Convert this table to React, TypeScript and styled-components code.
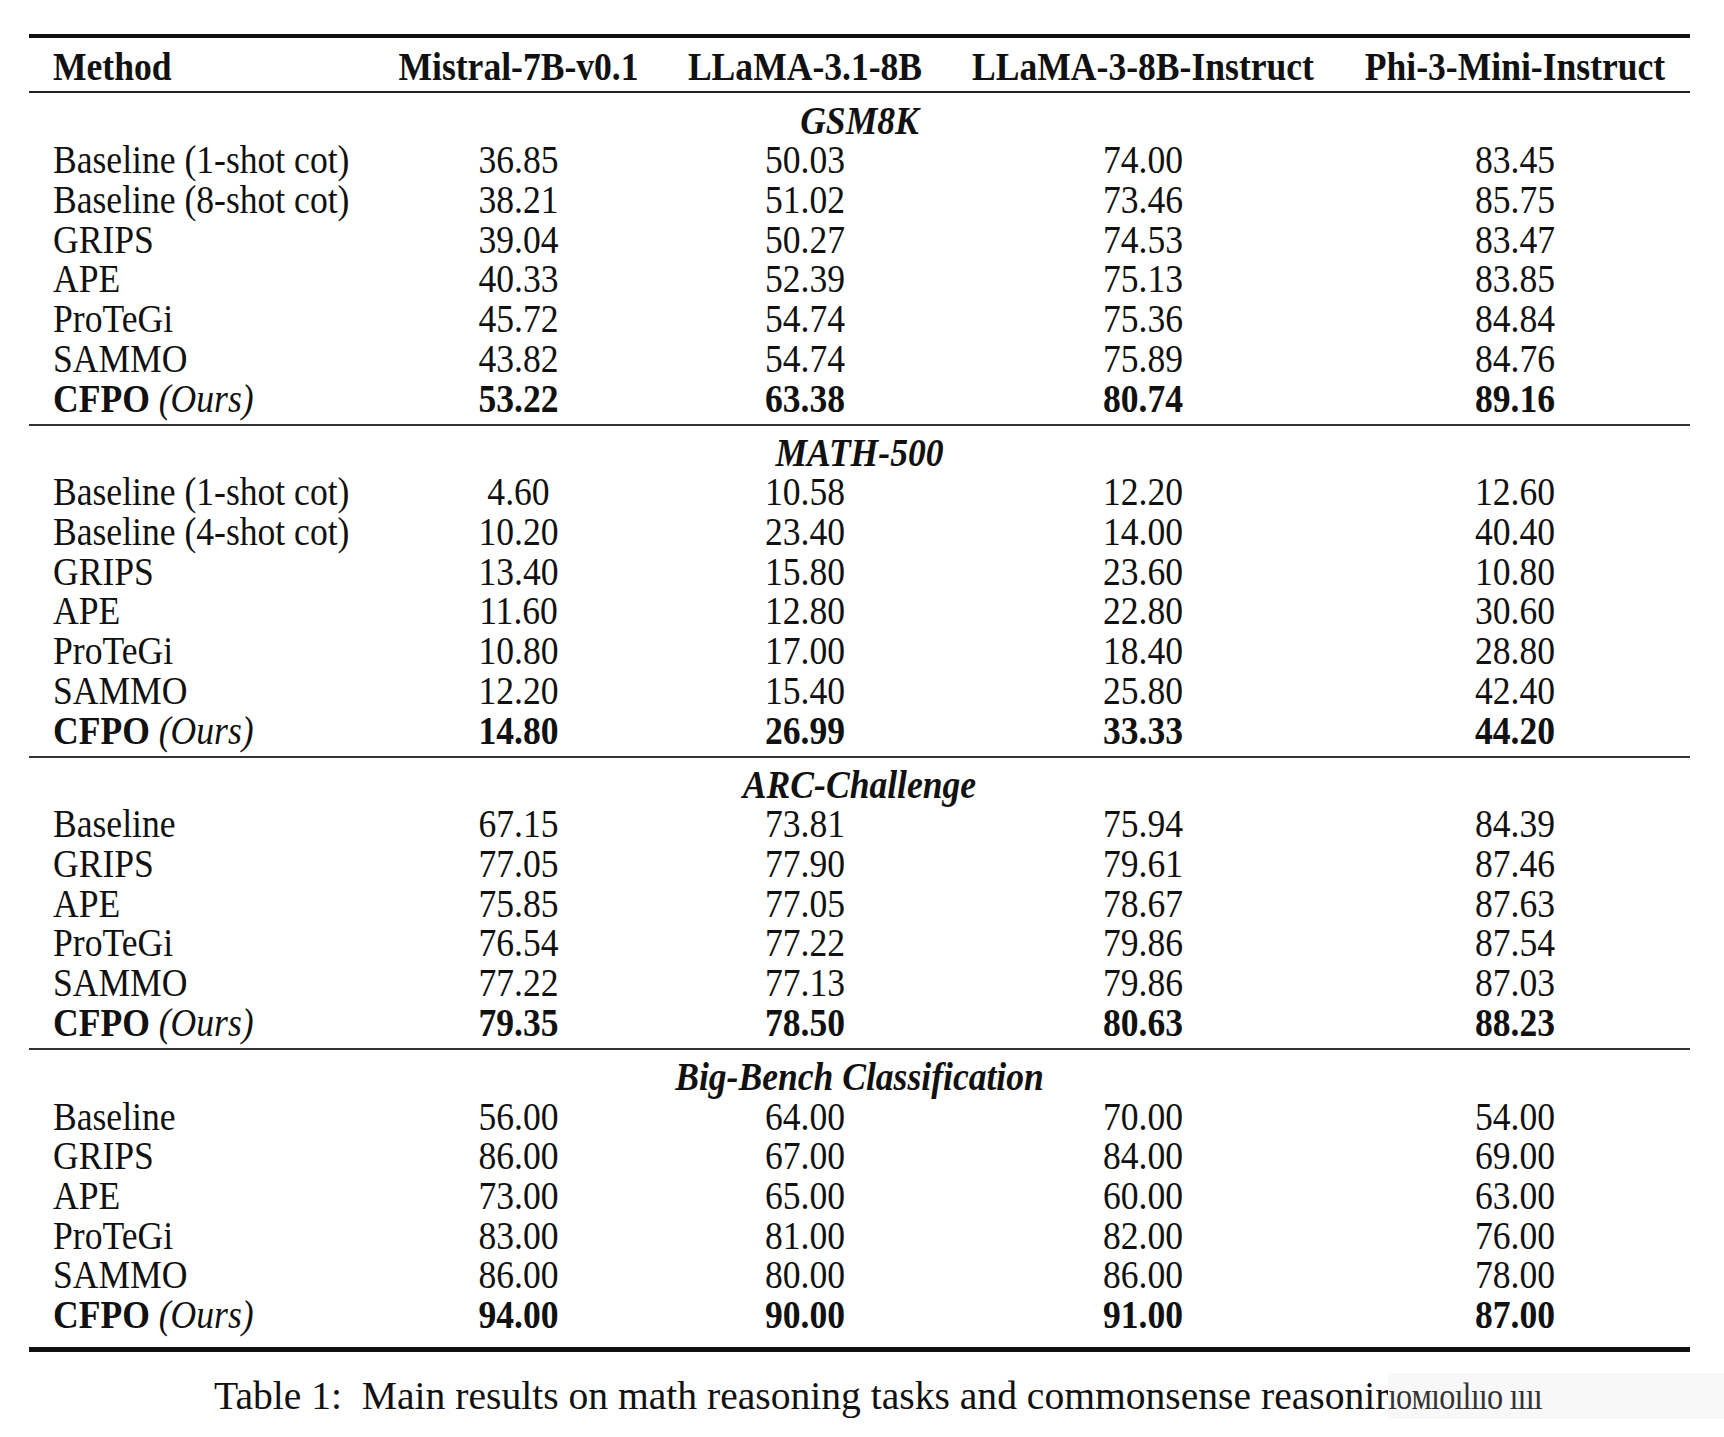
import React from "react";
import styled, { createGlobalStyle } from "styled-components";

const COLS = "344px 291px 282px 394px 350px";
const LINE = 39.7;
const FONT = 35.6;
const STRETCH = 1.1;

const Global = createGlobalStyle`
  html, body { margin: 0; padding: 0; background: #fff; }
  body { font-family: "Liberation Serif", "Times New Roman", serif; color: #111; }
`;

const Page = styled.main`
  width: 1724px;
  height: 1437px;
  padding-top: 34px;
  box-sizing: border-box;
  background: #fff;
  overflow: hidden;
`;

const Table = styled.section`
  margin-left: 29px;
  width: 1661px;
`;

const Rule = styled.div<{ $w: number; $above: number; $below: number; $c?: string }>`
  height: ${(p) => p.$w}px;
  background: ${(p) => p.$c ?? "#111"};
  margin: ${(p) => p.$above}px 0 ${(p) => p.$below}px;
`;

const Row = styled.div`
  display: grid;
  grid-template-columns: ${COLS};
  height: ${LINE}px;
`;

const Cell = styled.div<{ $left?: boolean; $bold?: boolean }>`
  font-size: ${FONT}px;
  line-height: ${LINE}px;
  white-space: nowrap;
  text-align: ${(p) => (p.$left ? "left" : "center")};
  padding-left: ${(p) => (p.$left ? "24px" : "0")};
  font-weight: ${(p) => (p.$bold ? 700 : 400)};
`;

/* the reference glyphs are slightly taller than Times at this width */
const Txt = styled.span`
  display: inline-block;
  line-height: 30px;
  transform: scaleY(${STRETCH});
  transform-origin: 50% 50%;
`;

const Ours = styled.span`
  font-weight: 400;
  font-style: italic;
`;

const Title = styled.div`
  height: ${LINE}px;
  font-size: ${FONT}px;
  line-height: ${LINE}px;
  font-weight: 700;
  font-style: italic;
  text-align: center;
  white-space: nowrap;
`;

const Caption = styled.div`
  display: flex;
  align-items: center;
  margin-top: 21px;
  padding-left: 214px;
  height: 46px;
`;

const CaptionText = styled.span`
  font-size: 39.6px;
  line-height: 44px;
  white-space: nowrap;
`;

const Watermark = styled.span`
  flex: 1;
  height: 46px;
  display: flex;
  align-items: center;
  background: #f8f8f8;
  overflow: hidden;
`;

const WatermarkGlyphs = styled.span`
  color: #333;
  font-size: 38px;
  letter-spacing: -1px;
  white-space: nowrap;
  transform: scaleX(0.85);
  transform-origin: 0 50%;
`;

type Sec = { title: string; rows: [string, string, string, string, string][]; best: [string, string, string, string] };

const sections: Sec[] = [
  {
    title: "GSM8K",
    rows: [
      ["Baseline (1-shot cot)", "36.85", "50.03", "74.00", "83.45"],
      ["Baseline (8-shot cot)", "38.21", "51.02", "73.46", "85.75"],
      ["GRIPS", "39.04", "50.27", "74.53", "83.47"],
      ["APE", "40.33", "52.39", "75.13", "83.85"],
      ["ProTeGi", "45.72", "54.74", "75.36", "84.84"],
      ["SAMMO", "43.82", "54.74", "75.89", "84.76"],
    ],
    best: ["53.22", "63.38", "80.74", "89.16"],
  },
  {
    title: "MATH-500",
    rows: [
      ["Baseline (1-shot cot)", "4.60", "10.58", "12.20", "12.60"],
      ["Baseline (4-shot cot)", "10.20", "23.40", "14.00", "40.40"],
      ["GRIPS", "13.40", "15.80", "23.60", "10.80"],
      ["APE", "11.60", "12.80", "22.80", "30.60"],
      ["ProTeGi", "10.80", "17.00", "18.40", "28.80"],
      ["SAMMO", "12.20", "15.40", "25.80", "42.40"],
    ],
    best: ["14.80", "26.99", "33.33", "44.20"],
  },
  {
    title: "ARC-Challenge",
    rows: [
      ["Baseline", "67.15", "73.81", "75.94", "84.39"],
      ["GRIPS", "77.05", "77.90", "79.61", "87.46"],
      ["APE", "75.85", "77.05", "78.67", "87.63"],
      ["ProTeGi", "76.54", "77.22", "79.86", "87.54"],
      ["SAMMO", "77.22", "77.13", "79.86", "87.03"],
    ],
    best: ["79.35", "78.50", "80.63", "88.23"],
  },
  {
    title: "Big-Bench Classification",
    rows: [
      ["Baseline", "56.00", "64.00", "70.00", "54.00"],
      ["GRIPS", "86.00", "67.00", "84.00", "69.00"],
      ["APE", "73.00", "65.00", "60.00", "63.00"],
      ["ProTeGi", "83.00", "81.00", "82.00", "76.00"],
      ["SAMMO", "86.00", "80.00", "86.00", "78.00"],
    ],
    best: ["94.00", "90.00", "91.00", "87.00"],
  },
];

const headers = ["Mistral-7B-v0.1", "LLaMA-3.1-8B", "LLaMA-3-8B-Instruct", "Phi-3-Mini-Instruct"];

export default function App() {
  return (
    <Page>
      <Global />
      <Table>
        <Rule $w={4} $above={0} $below={10} />
        <Row>
          <Cell $left $bold><Txt>Method</Txt></Cell>
          {headers.map((h) => (
            <Cell key={h} $bold><Txt>{h}</Txt></Cell>
          ))}
        </Row>
        <Rule $w={2} $above={3} $below={9} $c="#222" />
        {sections.map((s, si) => (
          <React.Fragment key={s.title}>
            {si > 0 && <Rule $w={2} $above={4.5} $below={8} $c="#333" />}
            <Title><Txt>{s.title}</Txt></Title>
            {s.rows.map((r, ri) => (
              <Row key={ri}>
                <Cell $left><Txt>{r[0]}</Txt></Cell>
                {r.slice(1).map((v, vi) => (
                  <Cell key={vi}><Txt>{v}</Txt></Cell>
                ))}
              </Row>
            ))}
            <Row>
              <Cell $left $bold>
                <Txt>CFPO <Ours>(Ours)</Ours></Txt>
              </Cell>
              {s.best.map((v, vi) => (
                <Cell key={vi} $bold><Txt>{v}</Txt></Cell>
              ))}
            </Row>
          </React.Fragment>
        ))}
        <Rule $w={5} $above={11} $below={0} />
      </Table>
      <Caption>
        <CaptionText>Table 1:&nbsp; Main results on math reasoning tasks and commonsense reasonir</CaptionText>
        <Watermark>
          <WatermarkGlyphs>ıoᴍıoılııo ıııı</WatermarkGlyphs>
        </Watermark>
      </Caption>
    </Page>
  );
}
